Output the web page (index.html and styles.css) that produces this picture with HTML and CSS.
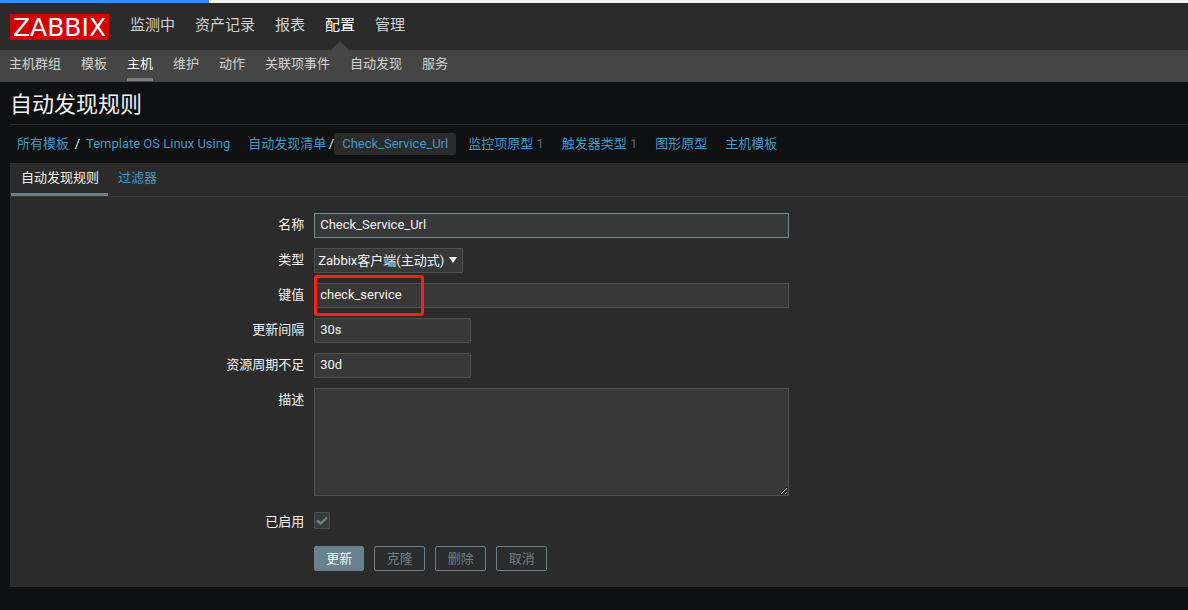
FILE: index.html
```
<!DOCTYPE html>
<html lang="zh-CN">
<head>
    <meta charset="UTF-8">
    <title>自动发现规则</title>
    <link rel="stylesheet" href="styles.css">
</head>
<body>
<div class="loading"><div class="loading-bar"></div></div>
<header>
    <div class="top-nav">
        <a href="#" class="logo">ZABBIX</a>
        <ul>
            <li><a href="#">监测中</a></li>
            <li><a href="#">资产记录</a></li>
            <li><a href="#">报表</a></li>
            <li class="selected"><a href="#">配置</a></li>
            <li><a href="#">管理</a></li>
        </ul>
    </div>
    <ul class="sub-nav">
        <li><a href="#">主机群组</a></li>
        <li><a href="#">模板</a></li>
        <li class="selected"><a href="#">主机</a></li>
        <li><a href="#">维护</a></li>
        <li><a href="#">动作</a></li>
        <li><a href="#">关联项事件</a></li>
        <li><a href="#">自动发现</a></li>
        <li><a href="#">服务</a></li>
    </ul>
</header>
<h1>自动发现规则</h1>
<main>
    <ul class="object-group">
        <li class="path"><a href="#">所有模板</a><span>/</span><a href="#">Template OS Linux Using</a></li>
        <li class="path current"><a href="#">自动发现清单</a><span>/</span><a href="#" class="active">Check_Service_Url</a></li>
        <li><a href="#">监控项原型</a> <sup>1</sup></li>
        <li><a href="#">触发器类型</a> <sup>1</sup></li>
        <li><a href="#">图形原型</a></li>
        <li><a href="#">主机模板</a></li>
    </ul>
    <form class="panel">
        <ul class="tabs">
            <li class="active"><a href="#">自动发现规则</a></li>
            <li><a href="#">过滤器</a></li>
        </ul>
        <div class="rows">
            <div class="row">
                <label for="name">名称</label>
                <div class="field"><input type="text" id="name" class="wide focus" value="Check_Service_Url"></div>
            </div>
            <div class="row">
                <label for="type">类型</label>
                <div class="field select">
                    <select id="type"><option>Zabbix客户端(主动式)</option></select>
                </div>
            </div>
            <div class="row">
                <label for="key">键值</label>
                <div class="field"><input type="text" id="key" class="wide" value="check_service"><div class="mark"></div></div>
            </div>
            <div class="row">
                <label for="delay">更新间隔</label>
                <div class="field"><input type="text" id="delay" value="30s"></div>
            </div>
            <div class="row">
                <label for="lifetime">资源周期不足</label>
                <div class="field"><input type="text" id="lifetime" value="30d"></div>
            </div>
            <div class="row">
                <label for="description">描述</label>
                <div class="field"><textarea id="description" class="wide"></textarea></div>
            </div>
            <div class="row status">
                <label for="status">已启用</label>
                <div class="field check">
                    <input type="checkbox" id="status" checked>
                    <svg width="12" height="10" viewBox="0 0 12 10"><path d="M1 4.5l3.5 3.2L11 1.5" fill="none" stroke="#69808d" stroke-width="2.4"/></svg>
                </div>
            </div>
            <div class="row buttons">
                <div class="field">
                    <button type="button" class="primary">更新</button>
                    <button type="button">克隆</button>
                    <button type="button">删除</button>
                    <button type="button">取消</button>
                </div>
            </div>
        </div>
    </form>
</main>
</body>
</html>
```
FILE: styles.css
```
*{margin:0;padding:0;box-sizing:border-box;list-style:none;}

body{background:#0e1012;color:#f2f2f2;font:13px/18px Roboto,"Noto Sans CJK SC",sans-serif;}
a{text-decoration:none;color:#4796c4;}

.loading{height:3px;background:#f0f1f2;}
.loading-bar{width:209px;height:3px;background:#3b8cf5;}

/* header */
.top-nav{display:flex;align-items:center;height:47px;padding:0 10px;background:#2b2b2b;}
.top-nav ul{display:flex;gap:20px;height:47px;margin-left:21px;font-size:15px;}
.top-nav li{position:relative;line-height:45px;}
.top-nav li a,.sub-nav a{color:#d2d2d2;}
.top-nav .selected a,.sub-nav .selected a{color:#fff;}
.top-nav .selected:after{content:"";position:absolute;left:50%;bottom:0;margin-left:-9px;border:9px solid transparent;border-top:0;border-bottom-color:#454545;}
.logo{width:99px;height:26px;background:#d40000;color:#fff;font:25px/27px "DejaVu Sans",sans-serif;text-align:center;}
.sub-nav{display:flex;gap:20px;height:32px;padding:0 9px;background:#454545;}
.sub-nav a{display:block;height:31px;line-height:28px;}
.sub-nav .selected a{border-bottom:3px solid #7d7d7d;}

h1{height:43px;margin-left:10px;border-bottom:1px solid #303030;font-size:22px;font-weight:normal;line-height:45px;}

/* breadcrumbs */
main{margin-left:10px;}
.object-group{display:flex;gap:18px;padding:8px 0 8px 7px;line-height:22px;}
.path{display:flex;}
.path span{width:17px;text-align:center;}
.path.current span{width:8px;text-align:right;}
.path .active{padding:0 8px;margin-right:-6px;background:#2b2b2b;border-radius:2px;}
.object-group sup{color:#5d6b74;font-size:13px;line-height:18px;vertical-align:baseline;}

/* form */
.panel{background:#2b2b2b;border:1px solid #303030;border-right:0;}
.tabs{display:flex;height:33px;border-bottom:1px solid #383838;}
.tabs a{display:block;height:32px;padding:0 9px 0 10px;line-height:28px;}
.tabs .active a{color:#f2f2f2;border-bottom:3px solid #69808d;}
.rows{padding:16px 0 15px;}
.row{display:flex;margin-bottom:10px;}
.row label{width:25%;padding-right:1px;line-height:23px;text-align:right;}
.field{position:relative;margin-left:9px;}
input[type=text],select,textarea{display:block;width:157px;height:25px;padding:0 5px;background:#383838;border:1px solid #4f4f4f;color:#f2f2f2;font:inherit;outline:none;}
input[type=text]{padding-bottom:2px;}
input.wide,textarea.wide{width:475px;}
input.focus{border-color:#768d99;}
textarea{height:108px;}
select{appearance:none;width:149px;padding:0 3px;border-radius:0;}
.select:after{content:"";position:absolute;right:6px;top:9px;border:4px solid transparent;border-top:6px solid #f2f2f2;border-bottom:0;pointer-events:none;}
.mark{position:absolute;left:0;top:-8px;width:110px;height:41px;border:3px solid #ff2015;border-radius:3px;pointer-events:none;}

.status{margin:14px 0 13px;}
.check input{appearance:none;display:block;width:16px;height:17px;margin-top:2px;background:#383838;border:1px solid #4f4f4f;border-radius:2px;}
.check svg{position:absolute;left:2px;top:6px;display:none;pointer-events:none;}
.check input:checked + svg{display:block;}
.buttons{margin-bottom:0;}
.buttons .field{display:flex;gap:10px;margin-left:calc(25% + 9px);}
button{width:51px;height:25px;background:transparent;border:1px solid #69808d;border-radius:2px;color:#69808d;font:inherit;line-height:22px;}
button.primary{width:50px;background:#69808d;color:#f2f2f2;}
```
